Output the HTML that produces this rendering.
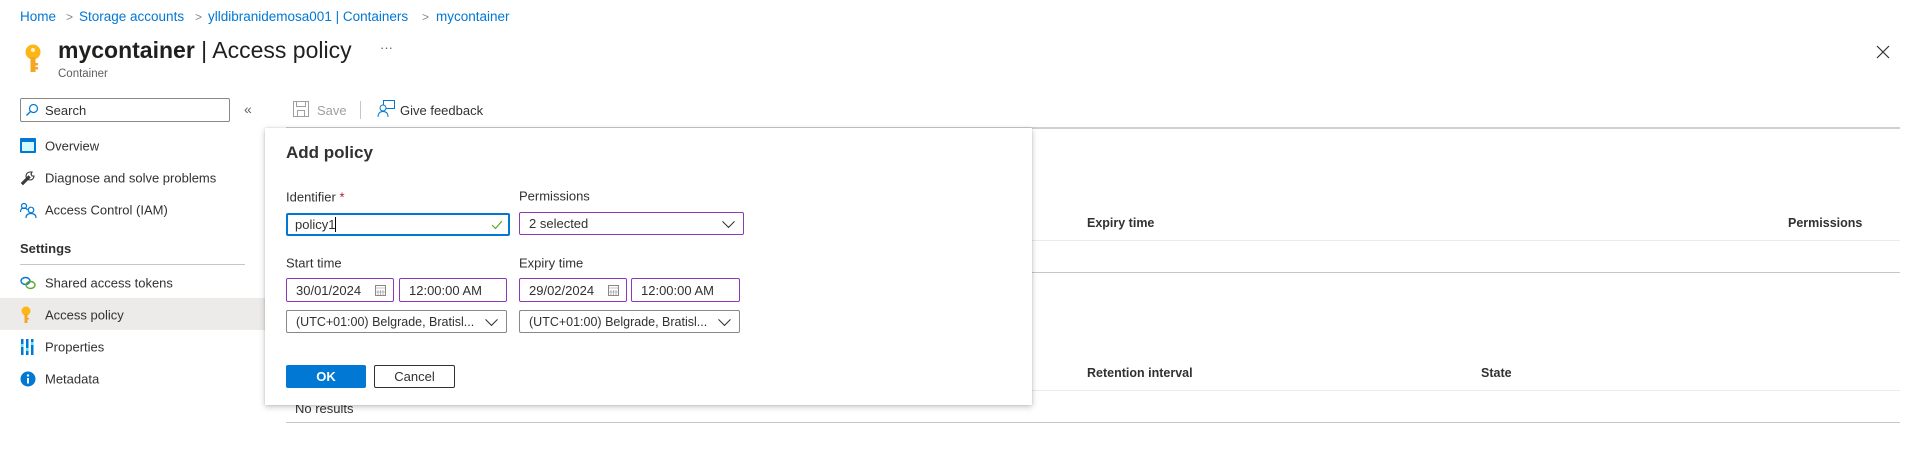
<!DOCTYPE html>
<html><head><meta charset="utf-8"><style>
*{box-sizing:border-box;margin:0;padding:0}
body{width:1920px;height:461px;overflow:hidden;background:#fff;font-family:"Liberation Sans",Arial,sans-serif;color:#323130;position:relative;font-size:13px}
.a{position:absolute;white-space:nowrap}
.bc{color:#0078d4;font-size:13.5px}
.sep{color:#8a8886;font-size:12px}
.nav{left:45px;font-size:13px;color:#323130;transform:translateY(-50%)}
.ico{position:absolute;left:20px}
.lbl{font-size:13px;color:#323130;transform:translateY(-50%)}
.box{position:absolute;border:1px solid #8a3ab9;border-radius:2px;background:#fff;font-size:13px;padding-left:9px;display:flex;align-items:center}
.gbox{border-color:#8a8886}
.hd{font-size:12.5px;font-weight:bold;color:#323130;transform:translateY(-50%)}
.chev{position:absolute;right:10px;top:50%;width:9px;height:9px;border-right:1.3px solid #323130;border-bottom:1.3px solid #323130;transform:translateY(-75%) rotate(45deg)}
</style></head><body>
<!-- breadcrumb -->
<div class="a bc" style="left:20px;top:9px">Home</div>
<div class="a sep" style="left:66px;top:10px">&gt;</div>
<div class="a bc" style="left:79px;top:9px">Storage accounts</div>
<div class="a sep" style="left:195px;top:10px">&gt;</div>
<div class="a bc" style="left:208px;top:9px">ylldibranidemosa001 | Containers</div>
<div class="a sep" style="left:422px;top:10px">&gt;</div>
<div class="a bc" style="left:436px;top:9px">mycontainer</div>
<!-- key icon -->
<svg class="a" style="left:23px;top:44px" width="20" height="30" viewBox="0 0 20 30"><circle cx="10" cy="8" r="7.5" fill="#fcb714"/><circle cx="10" cy="6" r="2" fill="#fff" opacity=".8"/><rect x="7.5" y="13" width="5" height="15" fill="#f5a623"/><rect x="12" y="19" width="3" height="2.5" fill="#f5a623"/><rect x="12" y="23" width="3" height="2.5" fill="#f5a623"/></svg>
<div class="a" style="left:58px;top:37px;font-size:23px;color:#201f1e"><b>mycontainer</b> | Access policy</div>
<div class="a" style="left:380px;top:40px;font-size:13px;color:#605e5c">···</div>
<div class="a" style="left:58px;top:68px;font-size:11.5px;color:#605e5c">Container</div>
<svg class="a" style="left:1876px;top:45px" width="14" height="14"><path d="M1 1L13 13M13 1L1 13" stroke="#323130" stroke-width="1.2"/></svg>
<!-- search -->
<div class="a" style="left:20px;top:98px;width:210px;height:24px;border:1px solid #8a8886;border-radius:2px"></div>
<svg class="a" style="left:25px;top:103px" width="14" height="14"><circle cx="8.5" cy="5.5" r="4" fill="none" stroke="#0078d4" stroke-width="1.2"/><path d="M5.5 8.5L1.5 12.5" stroke="#0078d4" stroke-width="1.3"/></svg>
<div class="a" style="left:45px;top:103px;font-size:13px;color:#323130">Search</div>
<div class="a" style="left:244px;top:101px;font-size:14px;color:#605e5c">«</div>
<!-- toolbar -->
<svg class="a" style="left:293px;top:101px" width="16" height="16"><rect x=".5" y=".5" width="15" height="15" fill="none" stroke="#a19f9d"/><rect x="3.5" y=".5" width="9" height="5" fill="none" stroke="#a19f9d"/><rect x="4.5" y="9.5" width="7" height="6" fill="none" stroke="#a19f9d"/></svg>
<div class="a" style="left:317px;top:103px;color:#a19f9d">Save</div>
<div class="a" style="left:360px;top:101px;width:1px;height:18px;background:#c8c6c4"></div>
<svg class="a" style="left:377px;top:100px" width="18" height="18"><rect x="6.5" y=".5" width="11" height="8" fill="none" stroke="#0078d4"/><circle cx="6" cy="8" r="3" fill="#fff" stroke="#0078d4"/><path d="M1 17c0-4 2-5.5 5-5.5s5 1.5 5 5.5" fill="none" stroke="#0078d4"/></svg>
<div class="a" style="left:400px;top:103px;color:#323130">Give feedback</div>
<div class="a" style="left:286px;top:127px;width:1614px;height:2px;background:#d2d0ce"></div>
<!-- nav -->
<svg class="ico" style="top:138px" width="16" height="15"><rect width="16" height="15" rx="1" fill="#0078d4"/><rect x="2" y="4" width="12" height="9" fill="#fff"/><rect x="2" y="4" width="12" height="9" fill="#50e6ff" opacity=".25"/></svg>
<div class="a nav" style="top:146px">Overview</div>
<svg class="ico" style="top:170px" width="16" height="16"><path d="M2 14l7-7M10 2a4 4 0 104 4l-2 0-1-2 1-2z" fill="none" stroke="#323130" stroke-width="1.1"/><path d="M1.5 13l1.5 1.5 7-7-1.5-1.5z" fill="none" stroke="#323130"/></svg>
<div class="a nav" style="top:178px">Diagnose and solve problems</div>
<svg class="ico" style="top:202px" width="17" height="16"><circle cx="4" cy="4" r="2.5" fill="none" stroke="#0078d4" stroke-width="1.2"/><path d="M0.5 10c0-3 1.5-4 3.5-4s3 1 3.5 2" fill="none" stroke="#0078d4" stroke-width="1.2"/><circle cx="11" cy="8" r="2.8" fill="none" stroke="#0078d4" stroke-width="1.2"/><path d="M6 16c0-3 2-4.5 5-4.5s5 1.5 5 4.5" fill="none" stroke="#0078d4" stroke-width="1.2"/></svg>
<div class="a nav" style="top:210px">Access Control (IAM)</div>
<div class="a" style="left:20px;top:241px;font-size:13px;font-weight:bold;color:#323130">Settings</div>
<div class="a" style="left:20px;top:264px;width:225px;height:1px;background:#c8c6c4"></div>
<svg class="ico" style="top:276px" width="16" height="14"><ellipse cx="5.5" cy="5" rx="4.5" ry="3.5" fill="none" stroke="#0078d4" stroke-width="1.4"/><ellipse cx="10.5" cy="9" rx="4.5" ry="3.5" fill="none" stroke="#5ea829" stroke-width="1.4"/></svg>
<div class="a nav" style="top:283px">Shared access tokens</div>
<div class="a" style="left:0;top:298px;width:265px;height:32px;background:#edebe9"></div>
<svg class="ico" style="top:306px" width="12" height="18" viewBox="0 0 12 18"><circle cx="6" cy="5" r="4.5" fill="#fcb714"/><rect x="4.5" y="8" width="3" height="9" fill="#f5a623"/><rect x="7" y="12" width="2" height="1.5" fill="#f5a623"/></svg>
<div class="a nav" style="top:315px">Access policy</div>
<svg class="ico" style="top:339px" width="14" height="16"><rect x="1" y="0" width="2.5" height="16" fill="#0078d4"/><rect x="6" y="0" width="2.5" height="16" fill="#0078d4"/><rect x="11" y="0" width="2.5" height="16" fill="#0078d4"/><rect x="1" y="5" width="2.5" height="3" fill="#50e6ff"/><rect x="6" y="9" width="2.5" height="3" fill="#50e6ff"/><rect x="11" y="3" width="2.5" height="3" fill="#50e6ff"/></svg>
<div class="a nav" style="top:347px">Properties</div>
<svg class="ico" style="top:371px" width="16" height="16"><circle cx="8" cy="8" r="7.5" fill="#0078d4"/><rect x="7" y="7" width="2" height="5.5" fill="#fff"/><circle cx="8" cy="4.5" r="1.2" fill="#fff"/></svg>
<div class="a nav" style="top:379px">Metadata</div>
<!-- background tables -->
<div class="a hd" style="left:1087px;top:223px">Expiry time</div>
<div class="a hd" style="left:1788px;top:223px">Permissions</div>
<div class="a" style="left:286px;top:240px;width:1614px;height:1px;background:#edebe9"></div>
<div class="a" style="left:286px;top:272px;width:1614px;height:1px;background:#c8c6c4"></div>
<div class="a hd" style="left:1087px;top:373px">Retention interval</div>
<div class="a hd" style="left:1481px;top:373px">State</div>
<div class="a" style="left:286px;top:390px;width:1614px;height:1px;background:#edebe9"></div>
<div class="a" style="left:295px;top:401px;font-size:13px">No results</div>
<div class="a" style="left:286px;top:422px;width:1614px;height:1px;background:#c8c6c4"></div>
<!-- dialog -->
<div class="a" style="left:265px;top:128px;width:767px;height:277px;background:#fff;box-shadow:0 2px 6px rgba(0,0,0,.22),0 0 2px rgba(0,0,0,.15)"></div>
<div class="a" style="left:286px;top:143px;font-size:17px;font-weight:bold;color:#323130">Add policy</div>
<div class="a lbl" style="left:286px;top:197px">Identifier <span style="color:#a4262c">*</span></div>
<div class="a lbl" style="left:519px;top:196px">Permissions</div>
<div class="box" style="left:286px;top:213px;width:224px;height:23px;border:2px solid #0078d4;padding-left:7px">policy1<span style="display:inline-block;width:1px;height:15px;background:#000"></span>
<svg style="position:absolute;right:5px;top:5px" width="12" height="10"><path d="M1 5l3.5 3.5L11 1" fill="none" stroke="#5ea829" stroke-width="1.2"/></svg></div>
<div class="box" style="left:519px;top:212px;width:225px;height:23px">2 selected<span class="chev"></span></div>
<div class="a lbl" style="left:286px;top:263px">Start time</div>
<div class="a lbl" style="left:519px;top:263px">Expiry time</div>
<div class="box" style="left:286px;top:278px;width:108px;height:24px">30/01/2024<svg style="position:absolute;right:7px;top:6px" width="11" height="11"><rect x=".5" y=".5" width="10" height="10" fill="none" stroke="#8a8886"/><path d="M.5 3h10M3 5v5M5.5 5v5M8 5v5M1 7h9" stroke="#8a8886" stroke-width=".6"/></svg></div>
<div class="box" style="left:399px;top:278px;width:108px;height:24px">12:00:00 AM</div>
<div class="box" style="left:519px;top:278px;width:108px;height:24px">29/02/2024<svg style="position:absolute;right:7px;top:6px" width="11" height="11"><rect x=".5" y=".5" width="10" height="10" fill="none" stroke="#8a8886"/><path d="M.5 3h10M3 5v5M5.5 5v5M8 5v5M1 7h9" stroke="#8a8886" stroke-width=".6"/></svg></div>
<div class="box" style="left:631px;top:278px;width:109px;height:24px">12:00:00 AM</div>
<div class="box gbox" style="left:286px;top:310px;width:221px;height:23px;font-size:12.5px">(UTC+01:00) Belgrade, Bratisl...<span class="chev"></span></div>
<div class="box gbox" style="left:519px;top:310px;width:221px;height:23px;font-size:12.5px">(UTC+01:00) Belgrade, Bratisl...<span class="chev"></span></div>
<div class="a" style="left:286px;top:365px;width:80px;height:23px;background:#0078d4;border-radius:2px;color:#fff;font-weight:bold;font-size:13px;text-align:center;line-height:23px">OK</div>
<div class="a" style="left:374px;top:365px;width:81px;height:23px;border:1px solid #323130;border-radius:2px;font-size:13px;text-align:center;line-height:21px">Cancel</div>
</body></html>
